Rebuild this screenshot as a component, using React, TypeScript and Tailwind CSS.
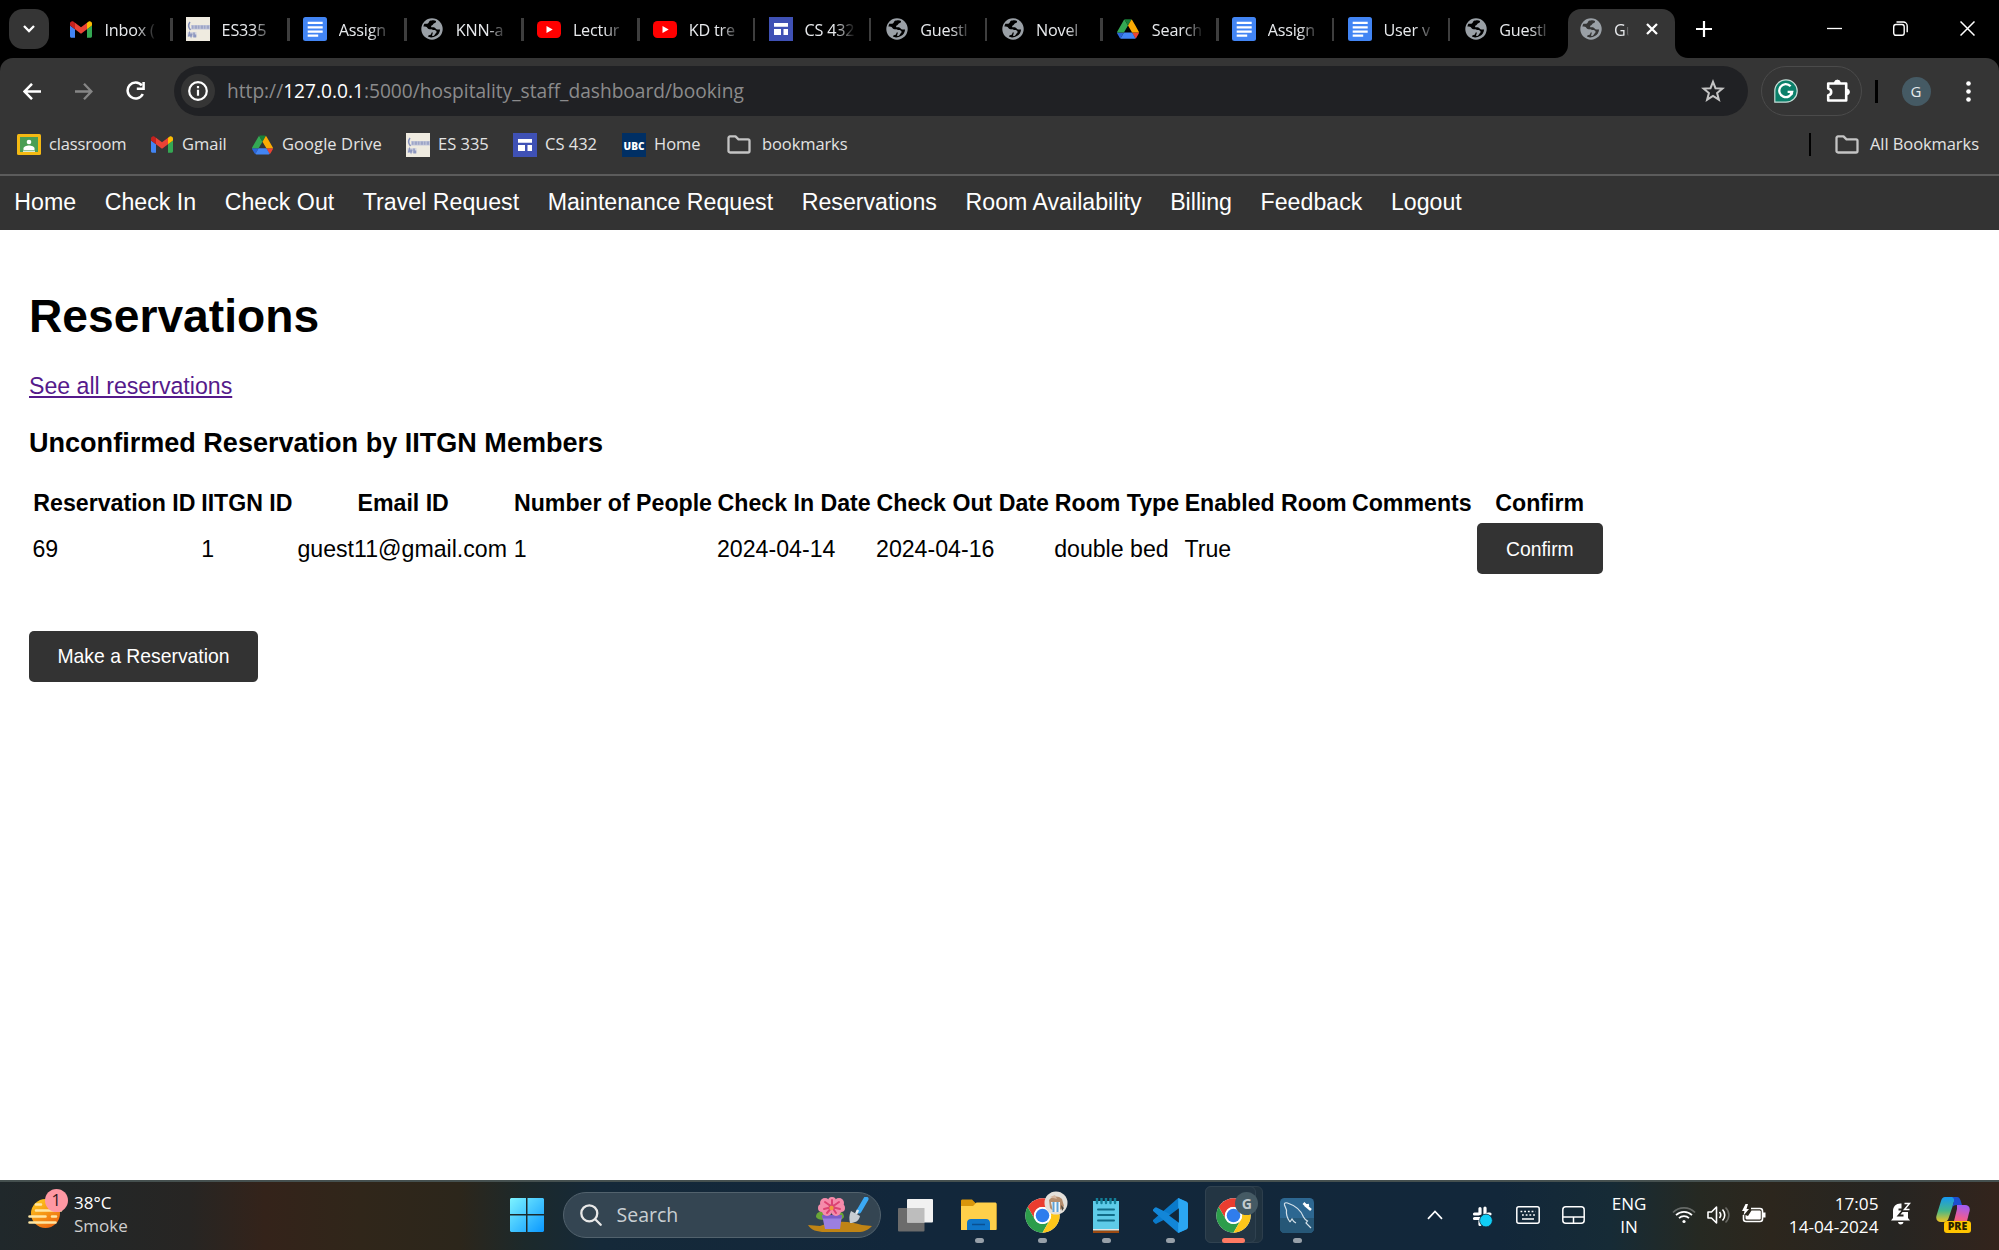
import React from "react";

type IconProps = { className?: string };

const Gmail = ({ className = "" }: IconProps) => (
  <svg viewBox="52 42 88 66" className={className}>
    <path fill="#4285f4" d="M58 108h14V74L52 59v43c0 3.32 2.69 6 6 6" />
    <path fill="#34a853" d="M120 108h14c3.32 0 6-2.69 6-6V59l-20 15" />
    <path fill="#fbbc04" d="M120 48v26l20-15v-8c0-7.42-8.47-11.65-14.4-7.2" />
    <path fill="#ea4335" d="M72 74V48l24 18 24-18v26L96 92" />
    <path fill="#c5221f" d="M52 51v8l20 15V48l-5.6-4.2c-5.94-4.45-14.4-.22-14.4 7.2" />
  </svg>
);

const Notes = ({ className = "" }: IconProps) => (
  <svg viewBox="0 0 24 24" className={className}>
    <rect width="24" height="24" fill="#efebe0" />
    <path d="M5 8h19v4.500H5z" fill="#c3c7da" />
    <path d="M1.500 15h9v5h-9z" fill="#d3d4de" />
    <g fill="none" stroke="#8590bb" strokeWidth="1.500">
      <path d="M4 5c-2.200 3-2.200 5 .5 8" />
      <path strokeWidth="3.200" strokeDasharray="1.500 1.200 2.500 .8" d="M6 10.200h17" opacity=".6" />
      <path d="M2.500 19.500l1-3.500 1.500 3.500 1-3M8 15.500v5M9.500 17.500v3" opacity=".9" />
    </g>
  </svg>
);

const Docs = ({ className = "" }: IconProps) => (
  <svg viewBox="0 0 24 24" className={className}>
    <rect width="24" height="24" rx="2.500" fill="#4285f4" />
    <path stroke="#fff" strokeWidth="2.300" d="M4.700 5.800h15M4.700 10.300h15M4.700 14.600h15M4.700 18.600h10.500" />
  </svg>
);

const Globe = ({ className = "", ink = "#000" }: IconProps & { ink?: string }) => (
  <svg viewBox="0 0 22 22" className={className}>
    <circle cx="11" cy="11" r="10.700" fill="#9aa0a6" />
    <path
      fill={ink}
      d="M12.300 2.200c1.200.2 2 .5 2.700.9.3 1.300-.6 1.900-1.800 2.200-1.200.3-.9 1.600-2 2-1 .3-1.300.9-.9 1.900 1.700.1 3.500-.2 4.400 1.200.8 1.300 2.300.8 4.400 1-.2 2.800-1.800 5.300-4.200 6.700-1.300.8-3.300 1.400-5 1.300-1.200-.1-2.200-.4-3-.8.200-1.500 1.500-1.500 2.600-1.900 1.100-.5.500-1.800 1.600-2.400 1.100-.5 1.400-1.300.9-2.100-.8-1-2.500-.7-3.800-.9-1.900-.3-1.700-2.200-3.200-2.600-.9-.3-1.700-.1-2.600-.3.200-1 .5-1.800 1-2.600 1.300 0 2.500.3 3.500-.4 1.200-.8 1-2 2.100-2.700 1-.6 2.200-.2 3.300-.5z"
    />
    <path fill="#9aa0a6" d="M11 12.500c2-.9 4.200-.2 4.600 1.200.2 1.200-1.200 1.500-1.700 2.700-.4.900-1.300 1.600-2.400 1.500-.9-.4-.1-1.500.2-2.400.3-1.100-1.300-1.700-.7-3z" />
  </svg>
);

const YouTube = ({ className = "" }: IconProps) => (
  <svg viewBox="0 0 24 17" className={className}>
    <rect width="24" height="17" rx="4.500" fill="#f00" />
    <path d="M9.500 4.900v7.200l6.200-3.600z" fill="#fff" />
  </svg>
);

const Sites = ({ className = "" }: IconProps) => (
  <svg viewBox="0 0 24 24" className={className}>
    <rect width="24" height="24" fill="#3f51b5" />
    <path fill="#fff" d="M5 6h14v3.800H5zM5 12h7v6H5zM14.500 12H19v6h-4.500z" />
  </svg>
);

const Drive = ({ className = "" }: IconProps) => (
  <svg viewBox="0 0 87.3 78" className={className}>
    <path d="m6.600 66.850 3.850 6.650c.8 1.400 1.950 2.500 3.300 3.300l13.750-23.800h-27.500c0 1.550.4 3.100 1.200 4.500z" fill="#2b66d9" />
    <path d="m43.650 25-13.750-23.800c-1.350.8-2.500 1.900-3.300 3.300l-25.400 44a9.060 9.060 0 0 0 -1.200 4.500h27.500z" fill="#34a853" />
    <path d="m73.550 76.800c1.350-.8 2.500-1.900 3.300-3.300l1.600-2.750 7.650-13.250c.8-1.400 1.200-2.950 1.200-4.500h-27.500l5.850 11.500z" fill="#ea4335" />
    <path d="m43.650 25 13.750-23.800c-1.350-.8-2.900-1.200-4.500-1.200h-18.500c-1.600 0-3.150.45-4.500 1.200z" fill="#188038" />
    <path d="m59.800 53h-32.300l-13.750 23.800c1.350.8 2.900 1.200 4.500 1.200h50.800c1.600 0 3.150-.45 4.500-1.200z" fill="#4285f4" />
    <path d="m73.400 26.500-12.700-22c-.8-1.400-1.950-2.500-3.300-3.300l-13.750 23.800 16.150 28h27.450c0-1.550-.4-3.100-1.200-4.500z" fill="#fbab04" />
  </svg>
);

const Classroom = ({ className = "" }: IconProps) => (
  <svg viewBox="0 0 24 21" className={className}>
    <rect width="24" height="21" rx="1.500" fill="#f4b913" />
    <rect x="3" y="3" width="18" height="15" fill="#4b9e55" />
    <circle cx="12" cy="8" r="2.300" fill="#fff" />
    <path d="M6.500 16v-1.500c0-2 3-3 5.500-3s5.500 1 5.500 3V16z" fill="#fff" />
    <path d="M6 18h12v-1.500H6z" fill="#d6ead8" />
  </svg>
);

const Folder = ({ className = "" }: IconProps) => (
  <svg viewBox="0 0 24 19" className={className}>
    <path
      d="M1.500 3c0-.8.600-1.600 1.500-1.600h5.500l3 2.900H21c.9 0 1.500.7 1.500 1.500v10.200c0 .8-.6 1.500-1.500 1.500H3c-.9 0-1.500-.7-1.500-1.500z"
      fill="none"
      stroke="#c4c4c4"
      strokeWidth="2.300"
      strokeLinejoin="round"
    />
  </svg>
);

const ChromeLogo = ({ className = "" }: IconProps) => (
  <svg viewBox="0 0 48 48" className={className}>
    <circle cx="24" cy="24" r="23.500" fill="#fff" />
    <path d="M3.650 12.250A23.500 23.500 0 0 1 44.350 12.250H24A11.750 11.750 0 0 0 13.820 29.880z" fill="#ea3d2f" />
    <path d="M3.650 12.250A23.500 23.500 0 0 0 24 47.500L34.180 29.880A11.750 11.750 0 0 1 13.820 29.880z" fill="#2c9d4b" />
    <path d="M24 47.500A23.500 23.500 0 0 0 44.350 12.250H24A11.750 11.750 0 0 1 34.180 29.880z" fill="#fdc61a" />
    <circle cx="24" cy="24" r="11.700" fill="#fff" />
    <circle cx="24" cy="24" r="9.300" fill="#2f7ded" />
  </svg>
);

const tabs: { icon: "gmail" | "notes" | "docs" | "globe" | "yt" | "sites" | "drive"; title: string }[] = [
  { icon: "gmail", title: "Inbox (" },
  { icon: "notes", title: "ES335" },
  { icon: "docs", title: "Assign" },
  { icon: "globe", title: "KNN-a" },
  { icon: "yt", title: "Lectur" },
  { icon: "yt", title: "KD tre" },
  { icon: "sites", title: "CS 432" },
  { icon: "globe", title: "Guestl" },
  { icon: "globe", title: "Novel" },
  { icon: "drive", title: "Search" },
  { icon: "docs", title: "Assign" },
  { icon: "docs", title: "User v" },
  { icon: "globe", title: "Guestl" },
];

const TabIcon = ({ kind }: { kind: (typeof tabs)[number]["icon"] }) => {
  switch (kind) {
    case "gmail":
      return <Gmail className="h-[17px] w-[22px]" />;
    case "notes":
      return <Notes className="size-[24px]" />;
    case "docs":
      return <Docs className="size-[24px]" />;
    case "globe":
      return <Globe className="size-[22px]" />;
    case "yt":
      return <YouTube className="h-[17px] w-[24px]" />;
    case "sites":
      return <Sites className="size-[24px]" />;
    case "drive":
      return <Drive className="h-[20px] w-[22px]" />;
  }
};

const TabStrip = () => (
  <div className="flex h-[58px] w-full shrink-0 bg-black text-[16.200px] text-[#e8eaed]">
    <div className="mt-[9px] ml-[9px] flex size-10 items-center justify-center rounded-[14px] bg-[#353535]">
      <svg viewBox="0 0 12 8" className="h-2 w-3" fill="none" stroke="#fff" strokeWidth="2.300">
        <path d="M1 1l5 5 5-5" />
      </svg>
    </div>
    <div className="ml-[6.500px] flex w-[1512px]">
      {tabs.map((t, i) => (
        <div key={i} className={`flex h-[58px] items-center ${i < 4 ? "w-[117.100px]" : "w-[115.800px]"}`}>
          <div className="ml-[13.500px] flex w-6 justify-center">
            <TabIcon kind={t.icon} />
          </div>
          <div className="mt-[2px] ml-[11.500px] h-6 w-[52px] overflow-hidden leading-6 tracking-[-0.200px] whitespace-nowrap [mask-image:linear-gradient(to_right,#000_60%,transparent_100%)]">
            {t.title}
          </div>
          {i < tabs.length - 1 && <div className="ml-auto h-[23px] w-[2.500px] bg-[#3e3e3e]" />}
        </div>
      ))}
    </div>
    <div className="relative mt-[9px] flex h-[49px] w-[107px] items-center rounded-t-[13px] bg-[#353535] pb-[9px]">
      <svg className="absolute bottom-0 left-[-13px] size-[13px]" viewBox="0 0 13 13">
        <path d="M13 0v13H0A13 13 0 0 0 13 0" fill="#353535" />
      </svg>
      <svg className="absolute right-[-13px] bottom-0 size-[13px]" viewBox="0 0 13 13">
        <path d="M0 0v13h13A13 13 0 0 1 0 0" fill="#353535" />
      </svg>
      <Globe className="ml-[12.500px] size-[22px]" ink="#353535" />
      <div className="mt-[2px] ml-3 h-6 w-[15px] overflow-hidden leading-6 [mask-image:linear-gradient(to_right,#000_65%,transparent)]">Gu</div>
      <svg viewBox="0 0 12 12" className="ml-[16.500px] size-3" fill="none" stroke="#fff" strokeWidth="2.300">
        <path d="M1 1l10 10M11 1L1 11" />
      </svg>
    </div>
    <svg viewBox="0 0 16 16" className="mt-[21px] ml-[21px] size-4" fill="none" stroke="#fff" strokeWidth="2.200">
      <path d="M8 0v16M0 8h16" />
    </svg>
    <div className="mt-[21px] ml-auto flex items-center self-start">
      <svg viewBox="0 0 15 15" className="size-[15px]" stroke="#fff" strokeWidth="1.300">
        <path d="M0 7.500h15" />
      </svg>
      <svg viewBox="0 0 15 15" className="ml-[51px] size-[15px]" fill="none" stroke="#fff" strokeWidth="1.400">
        <rect x=".7" y="3.500" width="10.500" height="10.800" rx="2.200" />
        <path d="M3.500 1h6.800a3.900 3.900 0 0 1 3.900 3.900v6.300" />
      </svg>
      <svg viewBox="0 0 15 15" className="mr-[24.500px] ml-[52px] size-[15px]" stroke="#fff" strokeWidth="1.500">
        <path d="M.5.5l14 14M14.500.5l-14 14" />
      </svg>
    </div>
  </div>
);

const Toolbar = () => (
  <div className="flex h-[66px] w-full shrink-0 items-center">
    <svg viewBox="0 0 18 17" className="ml-[23px] h-[17px] w-[18px]" fill="none" stroke="#fff" strokeWidth="2.500">
      <path d="M9 .8L1.600 8.500 9 16.200M1.500 8.500H18" />
    </svg>
    <svg viewBox="0 0 18 17" className="ml-[34px] h-[17px] w-[18px]" fill="none" stroke="#868686" strokeWidth="2.300">
      <path d="M9 .8l7.400 7.700L9 16.200M16.500 8.500H0" />
    </svg>
    <svg viewBox="0 0 20 20" className="ml-[33px] size-5" fill="none" stroke="#fff" strokeWidth="2.500">
      <path d="M16.800 13a8 8 0 1 1-1-8.600" />
      <path d="M17.600 1v6.800h-6.800" />
    </svg>
    <div className="ml-[27.500px] flex h-[49.500px] w-[1574.500px] items-center rounded-full bg-[#202124]">
      <div className="ml-[7px] flex size-[34px] items-center justify-center rounded-full bg-[#353535]">
        <svg viewBox="0 0 20 20" className="size-5" fill="none" stroke="#fff" strokeWidth="2.200">
          <circle cx="10" cy="10" r="8.800" />
          <path d="M10 8.800v6M10 5v2.200" />
        </svg>
      </div>
      <div className="ml-[12.500px] text-[19.150px] whitespace-nowrap text-[#8b8b8c]">
        http://<span className="text-white">127.0.0.1</span>:5000/hospitality_staff_dashboard/booking
      </div>
      <svg viewBox="0 0 24 24" className="mr-[23px] ml-auto size-6" fill="none" stroke="#c4c4c4" strokeWidth="2">
        <path d="M12 2.800l2.500 6.400 6.900.4-5.300 4.400 1.800 6.700L12 17l-5.900 3.700L7.900 14 2.600 9.600l6.900-.4z" />
      </svg>
    </div>
    <div className="ml-[13px] flex h-[49.500px] w-[101px] items-center rounded-full border-[1.500px] border-[#4b4b4b]">
      <svg viewBox="0 0 24 24" className="ml-3 size-6">
        <path d="M12 .8A11.200 11.200 0 1 1 12 23.200H.8V12A11.200 11.200 0 0 1 12 .8" fill="#0b806a" stroke="#c8dcd7" strokeWidth="1.200" />
        <path d="M16.600 7.300a6.500 6.500 0 1 0 1.600 5.500h-4.600" fill="none" stroke="#fff" strokeWidth="2.300" />
        <path d="M15.500 12.800l3 2.700" stroke="#fff" strokeWidth="2" />
      </svg>
      <svg viewBox="0 0 25 25" className="ml-7 size-[25px]" fill="none" stroke="#fff" strokeWidth="2.600" strokeLinejoin="round">
        <path d="M2.200 4.500h18v17h-18v-5.200c4-1 4-5.700 0-6.700z" />
        <path d="M8.500 4a2.900 2.900 0 0 1 5.800 0zM20.500 10a2.900 2.900 0 0 1 0 5.800z" fill="#fff" strokeWidth="1" />
      </svg>
    </div>
    <div className="ml-[13px] h-[23px] w-[2.500px] bg-black" />
    <div className="ml-[24px] flex size-[29px] items-center justify-center rounded-full bg-[#455a64] text-[15px] text-[#e6ebed]">G</div>
    <svg viewBox="0 0 5 21" className="ml-[35px] h-[21px] w-[5px]" fill="#fff">
      <circle cx="2.500" cy="2.500" r="2.300" />
      <circle cx="2.500" cy="10.500" r="2.300" />
      <circle cx="2.500" cy="18.500" r="2.300" />
    </svg>
  </div>
);

const BookmarkBar = () => (
  <div className="flex h-[50px] w-full shrink-0 items-center pb-[9px] text-[16.500px] whitespace-nowrap text-[#e3e3e3]">
    <Classroom className="ml-[17px] h-[21px] w-6" />
    <span className="ml-2 w-[77px] tracking-[-0.150px]">classroom</span>
    <Gmail className="ml-[25px] h-[17px] w-[22px]" />
    <span className="ml-[9px] w-[45px]">Gmail</span>
    <Drive className="ml-[25px] h-[20px] w-[21px]" />
    <span className="ml-[9px] w-[101px] tracking-[0.080px]">Google Drive</span>
    <Notes className="ml-[23px] size-6" />
    <span className="ml-2 w-[51px]">ES 335</span>
    <Sites className="ml-6 size-6" />
    <span className="ml-2 w-[53px]">CS 432</span>
    <div className="ml-[24px] flex size-6 items-center justify-center bg-[#002f64] pt-1 text-[10px] font-extrabold text-white">UBC</div>
    <span className="ml-2 w-[47px]">Home</span>
    <Folder className="ml-[26px] h-[19px] w-6" />
    <span className="ml-[11px] w-[86px] tracking-[-0.100px]">bookmarks</span>
    <div className="ml-auto h-[23px] w-[2.500px] bg-black" />
    <Folder className="ml-[24px] h-[19px] w-6" />
    <span className="mr-5 ml-[11px] w-[109px] tracking-[-0.080px]">All Bookmarks</span>
  </div>
);

const navItems = [
  "Home",
  "Check In",
  "Check Out",
  "Travel Request",
  "Maintenance Request",
  "Reservations",
  "Room Availability",
  "Billing",
  "Feedback",
  "Logout",
];

const headers = [
  "Reservation ID",
  "IITGN ID",
  "Email ID",
  "Number of People",
  "Check In Date",
  "Check Out Date",
  "Room Type",
  "Enabled Room",
  "Comments",
  "Confirm",
];

const row = ["69", "1", "guest11@gmail.com", "1", "2024-04-14", "2024-04-16", "double bed", "True", ""];

const Page = () => (
  <main className="flex flex-1 flex-col items-start bg-white pl-[29px] font-['Liberation_Sans',Arial,sans-serif] text-[23.150px] text-black">
    <h1 className="mt-[60px] text-[46.200px] leading-[52px] font-bold">Reservations</h1>
    <a className="mt-[31px] leading-[26px] text-[#551a8b] underline">See all reservations</a>
    <h3 className="mt-[29px] text-[27.050px] leading-[30px] font-bold">Unconfirmed Reservation by IITGN Members</h3>
    <table className="mt-[29px] w-[1576.800px] table-fixed border-separate border-spacing-[2.860px] leading-[26px] whitespace-nowrap">
      <colgroup>
        <col className="w-[165.800px]" />
        <col className="w-[93.700px]" />
        <col className="w-[213.100px]" />
        <col className="w-[200.100px]" />
        <col className="w-[156.100px]" />
        <col className="w-[175.100px]" />
        <col className="w-[127.600px]" />
        <col className="w-[164.100px]" />
        <col className="w-[122.600px]" />
        <col className="w-[127.500px]" />
      </colgroup>
      <thead>
        <tr>
          {headers.map((h) => (
            <th key={h} className="px-0 pt-[1.400px] pb-[3px] text-center font-bold">
              {h}
            </th>
          ))}
        </tr>
      </thead>
      <tbody>
        <tr>
          {row.map((c, i) => (
            <td key={i} className="p-[1.400px] align-middle">
              {c}
            </td>
          ))}
          <td className="p-[1.400px]">
            <button className="block h-[51.500px] w-[126px] rounded-[5px] bg-[#333] text-[19.350px] text-white">Confirm</button>
          </td>
        </tr>
      </tbody>
    </table>
    <button className="mt-[53px] h-[51.500px] w-[229px] rounded-[5px] bg-[#333] text-[19.350px] text-white">Make a Reservation</button>
  </main>
);

const TaskSlot = ({ children, dot = true }: { children: React.ReactNode; dot?: boolean }) => (
  <div className="flex h-full w-[63.700px] flex-col items-center">
    <div className="relative mt-[14.500px] flex h-[37px] items-center justify-center">{children}</div>
    {dot && <div className="mt-[4px] h-[5px] w-[9px] rounded-full bg-[#97a0a9]" />}
  </div>
);

const Taskbar = () => (
  <div className="flex h-[70px] w-full shrink-0 border-t-2 border-[#45504f] bg-[linear-gradient(to_right,#20282b_0px,#272523_190px,#34231a_265px,#30261a_360px,#2c261b_460px,#1c292b_525px,#152939_600px,#12273b_900px,#12273a_1500px,#162b36_1610px,#262922_1700px,#2c261d_1770px,#262522_1890px,#33241c_1999px)] text-[18px] text-white">
    <div className="relative mt-[13px] ml-[27px] h-[38px] w-[40px]">
      <svg viewBox="0 0 40 38" className="h-[38px] w-10">
        <defs>
          <linearGradient id="sun" x1="0" y1="0" x2=".6" y2="1">
            <stop offset="0" stopColor="#ffd21f" />
            <stop offset="1" stopColor="#ee6a10" />
          </linearGradient>
        </defs>
        <circle cx="18.500" cy="18.500" r="14.500" fill="url(#sun)" />
        <g stroke="#ffe6a3" strokeWidth="2.600" strokeLinecap="round">
          <path d="M9 9.500h5M9 15.500h25M2.500 21.500h16M25 21.500h4M2.500 27.500h26" />
        </g>
      </svg>
      <div className="absolute top-[-6.500px] left-[17.500px] flex size-[23.500px] items-center justify-center rounded-full bg-[#ff98a3] text-[16.500px] text-[#33181c]">1</div>
    </div>
    <div className="mt-[9px] ml-[7px] w-[80px] text-[17px] leading-[23px]">
      <div>38°C</div>
      <div className="text-[#cfcfcf]">Smoke</div>
    </div>
    <svg viewBox="0 0 34 34" className="mt-[16px] ml-[356px] size-[34px]">
      <defs>
        <linearGradient id="win" x1="0" y1="0" x2="1" y2="1">
          <stop offset="0" stopColor="#7df3ff" />
          <stop offset="1" stopColor="#0a98ff" />
        </linearGradient>
      </defs>
      <path fill="url(#win)" d="M1 0h15v16H0V1zM17.500 0H33l1 1v15H17.500zM0 17.500h16V34H1l-1-1zM17.500 17.500H34V33l-1 1H17.500z" />
    </svg>
    <div className="mt-[10px] ml-[19px] flex h-[46px] w-[318px] items-center rounded-full border border-[#52626d] bg-[#344552]">
      <svg viewBox="0 0 22 22" className="ml-[16px] size-[22px]" fill="none" stroke="#e8e8e8" strokeWidth="2.300" strokeLinecap="round">
        <circle cx="9.300" cy="9.300" r="8" />
        <path d="M15.200 15.200l5.500 5.500" />
      </svg>
      <span className="ml-[14.500px] w-[70px] text-[19.500px] text-[#c9cfd3]">Search</span>
      <svg viewBox="0 0 66 36" className="ml-[120px] h-9 w-[66px]">
        <path d="M1 28l12 1c15-6 30-5 42-1l10 1c-4 4-8 6-14 6H18C10 35 4 33 1 28z" fill="#c08415" />
        <path d="M9 20c0-5 4-6 8-5l4 5-4 3c-4 0-7-1-8-3zM37 20c0-5-4-6-8-5l-3 5 4 3c4 0 6-1 7-3z" fill="#6aa637" />
        <path d="M15 18h20l-2 14H18z" fill="#9b7fe0" />
        <path d="M15 18h20l-.5 3.500h-19z" fill="#7c5cc9" />
        <g fill="#f58bab">
          <circle cx="18" cy="6" r="5" />
          <circle cx="25" cy="4" r="4" />
          <circle cx="32" cy="6" r="5" />
          <circle cx="34" cy="11" r="4" />
          <circle cx="29" cy="14" r="5" />
          <circle cx="20" cy="14" r="5" />
          <circle cx="15" cy="11" r="4" />
        </g>
        <path d="M25 10l-7-5M25 10l0-7M25 10l7-5M25 10l8 2M25 10l4 6M25 10l-5 6M25 10l-8 2" stroke="#dc4272" strokeWidth="2" strokeLinecap="round" />
        <circle cx="24.500" cy="11" r="2.200" fill="#ef9a3d" />
        <path d="M59 2l-7 12" stroke="#3ba9f4" strokeWidth="5" strokeLinecap="round" />
        <path d="M51 13l-2 4" stroke="#dfe6ea" strokeWidth="2.500" />
        <path d="M44 14l9 5c-1 5-5 7-10 7-1-4-1-8 1-12z" fill="#c7cdd2" />
      </svg>
    </div>
    <div className="ml-[2.500px] flex h-full">
      <TaskSlot dot={false}>
        <svg viewBox="0 0 35 33" className="h-[33px] w-[35px]">
          <rect x="0" y="9" width="26.500" height="23.500" rx="1" fill="#6b6b6b" />
          <rect x="9" y="0" width="26" height="23.500" rx="1" fill="#f1f1f1" />
          <rect x="9" y="9" width="17.500" height="14.500" fill="#bdbdbd" />
        </svg>
      </TaskSlot>
      <TaskSlot>
        <svg viewBox="0 0 36 32" className="h-8 w-9">
          <path d="M0 2c0-1 .6-1.500 1.500-1.500H11l3.500 3.500H34c1 0 1.500.5 1.500 1.500V30H0z" fill="#d9960b" />
          <path d="M0 7h12l3.500-3.500H34c1 0 1.500.5 1.500 1.500v26H0z" fill="#ffd04a" />
          <path d="M6 31v-7c0-2.500 1.500-4 4-4h15c2.500 0 4 1.500 4 4v7z" fill="#0f75c8" />
          <path d="M11 25.500h13" stroke="#0a4f90" strokeWidth="1.500" />
        </svg>
      </TaskSlot>
      <TaskSlot>
        <ChromeLogo className="size-[35px]" />
        <svg viewBox="0 0 24 24" className="absolute top-[-5.500px] left-[19px] size-6">
          <circle cx="12" cy="12" r="11.500" fill="#e4e0da" />
          <path d="M5 9c3-4 9-5 13-1l2 7c-4 6-11 6-14 2z" fill="#b58d6d" />
          <path d="M7 11h9v10H9z" fill="#f4f6f8" />
          <path d="M9.500 11v10M13.500 11v10" stroke="#5fa3d8" strokeWidth="2" />
          <path d="M17 14l3 3-2 3z" fill="#4c443a" />
          <path d="M6 6l5-2 2 4z" fill="#d8b8a0" />
        </svg>
      </TaskSlot>
      <TaskSlot>
        <svg viewBox="0 0 26 35" className="h-[35px] w-[26px]">
          <path d="M0 3h26v30H0z" fill="#5ecbe8" />
          <path d="M0 31h26v1.500H0z" fill="#e8e4e0" />
          <path d="M0 32.500h26V35H0z" fill="#9c4a12" />
          <path d="M4 0v5M8.500 0v5M13 0v5M17.500 0v5M22 0v5" stroke="#137e97" strokeWidth="2.400" strokeLinecap="round" />
          <path d="M5 11.500h16M5 17h16M5 22.500h16" stroke="#116c88" strokeWidth="2" strokeLinecap="round" />
        </svg>
      </TaskSlot>
      <TaskSlot>
        <svg viewBox="0 0 100 100" className="size-[35px]">
          <path d="M72 0L96 11c2 1 4 4 4 7v10L12 72c-2 2-5 2-7 0l-4-4c-2-2-2-4 0-6z" fill="#0a7acb" />
          <path d="M1 38c-2-2-2-5 0-6l4-4c2-2 5-2 7 0l88 44v10c0 3-2 6-4 7L72 100z" fill="#1286d8" />
          <path d="M72 0v100l24-11c2-1 4-4 4-7V18c0-3-2-6-4-7z" fill="#2ba6f2" />
          <path d="M74 29v42L46 50z" fill="#12273b" />
        </svg>
      </TaskSlot>
      <div className="relative flex h-full w-[63.700px] flex-col items-center">
        <div className="absolute top-[4px] left-[3px] h-[57px] w-[58px] rounded-[6px] border border-[#2d3e4c] bg-[#20323f]" />
        <div className="absolute top-[4px] left-[3px] h-[57px] w-[51px] rounded-[6px] border border-[#304250] bg-[#233543]" />
        <div className="relative mt-[14.500px] flex h-[37px] items-center">
          <ChromeLogo className="size-[35px]" />
          <div className="absolute top-[-5px] left-[19px] flex size-[23px] items-center justify-center rounded-full bg-[#455a64] text-[14px] font-bold text-[#c3cbcf]">G</div>
        </div>
        <div className="relative mt-[4px] h-[5px] w-[23px] rounded-full bg-[#ff7a63]" />
      </div>
      <TaskSlot>
        <svg viewBox="0 0 34 35" className="h-[35px] w-[34px]">
          <rect width="34" height="35" rx="4.500" fill="#2d6791" />
          <path d="M0 20h34v10.500a4.500 4.500 0 0 1-4.500 4.500h-25A4.500 4.500 0 0 1 0 30.500z" fill="#265777" />
          <path d="M10 24c-3-4-4-8-3.500-12L4.500 7c-.5-2 1-2.700 3-2 6 2 13 6 16 14 1 2 2 3 4 4l-1.500 2 5 5M10 24l2-3c1 2 2 3 4 4" fill="none" stroke="#d6e2ea" strokeWidth="1.200" />
          <path d="M23.500 5l2.500 2.500 3-.5M25 7l6 5" stroke="#fff" strokeWidth="2.600" fill="none" />
        </svg>
      </TaskSlot>
    </div>
    <div className="ml-auto flex h-full items-center pb-[3px]">
      <svg viewBox="0 0 16 10" className="h-[10px] w-4" fill="none" stroke="#fff" strokeWidth="1.700">
        <path d="M1 8.800L8 1.500l7 7.300" />
      </svg>
      <svg viewBox="0 0 22 22" className="mt-1 ml-[28.500px] size-[22px]">
        <g stroke="#fff" strokeWidth="3.200" strokeLinecap="round">
          <path d="M8 2.500v5M13 2v6M2.500 8h4M2.500 12.500h6M16 8h2M8 15v3.500" />
        </g>
        <circle cx="14" cy="14.500" r="6.400" fill="#10cdf5" stroke="#12273a" strokeWidth=".8" />
      </svg>
      <svg viewBox="0 0 24 18" className="ml-[22.500px] h-[18px] w-6" fill="none" stroke="#fff" strokeWidth="1.500">
        <rect x=".8" y=".8" width="22.400" height="16.400" rx="2" />
        <path d="M4.500 5.500h15M6 9h13" strokeDasharray="1.800 1.900" strokeWidth="1.700" />
        <path d="M6 13h12" />
      </svg>
      <svg viewBox="0 0 23 18" className="ml-[22px] h-[18px] w-[23px]" fill="none" stroke="#fff" strokeWidth="1.500">
        <rect x=".8" y=".8" width="21.400" height="16.400" rx="3" />
        <path d="M.8 11h21.400M11.500 11v6" />
      </svg>
      <div className="ml-[24px] w-[40px] text-center text-[17px] leading-[23px]">
        ENG
        <br />
        IN
      </div>
      <svg viewBox="0 0 24 18" className="ml-[23px] h-[18px] w-6" fill="none" stroke="#fff" strokeWidth="1.700">
        <path d="M1 6.500a15.500 15.500 0 0 1 22 0" opacity=".3" />
        <path d="M4 9.200a11.300 11.300 0 0 1 16 0M7 12.200a7 7 0 0 1 10 0" />
        <circle cx="12" cy="15.500" r="1.600" fill="#fff" stroke="none" />
      </svg>
      <svg viewBox="0 0 24 20" className="ml-[10.500px] h-5 w-6" fill="none" stroke="#fff" strokeWidth="1.600">
        <path d="M1 7h3.500L9.500 2v16l-5-5H1z" strokeLinejoin="round" />
        <path d="M12.500 7c1.500 1.800 1.500 4.200 0 6M15.500 4.500c3 3.200 3 7.800 0 11" />
        <path d="M18.500 2.500c4.500 4.500 4.500 10.500 0 15" opacity=".3" />
      </svg>
      <svg viewBox="0 0 24 20" className="mb-0.5 ml-[11px] h-5 w-6" fill="none">
        <path d="M9 4.500h9c1.500 0 2.500 1 2.500 2.500v8c0 1.500-1 2.500-2.500 2.500H4c-1.500 0-2.500-1-2.500-2.500v-4" stroke="#fff" strokeWidth="1.600" />
        <path d="M9.500 6.500H18l.8.8v7.400l-.8.800H4.500l-1-1v-3.500L6 12z" fill="#fff" />
        <path d="M21 8.500h2.500v5H21zM3.500 0L0 7h2.500L1.500 11.500 7 5H4.500L6 0z" fill="#fff" />
      </svg>
      <div className="ml-[21px] w-[92px] text-right text-[17.200px] leading-[23px] whitespace-nowrap">
        17:05
        <br />
        14-04-2024
      </div>
      <svg viewBox="0 0 20 24" className="mb-1 ml-[12.500px] h-6 w-5">
        <path d="M2 17V10c0-4.500 3-7.500 7.500-7.500h1V11H17v6l2 2.500H0zM7 21h5.500c-.5 1.800-1.500 2.500-2.800 2.500S7.500 22.800 7 21z" fill="#fff" />
        <path d="M7.500 8.500h5l-5 6h5" fill="none" stroke="#282622" strokeWidth="1.800" />
        <path d="M13.500 2.500h5l-5 6h5" fill="none" stroke="#fff" strokeWidth="1.500" />
      </svg>
      <div className="relative mr-[28px] ml-[25px] h-[36px] w-[35px]">
        <svg viewBox="0 0 34 34" className="size-[34px]">
          <defs>
            <linearGradient id="copA" x1="0" y1="0" x2="0" y2="1">
              <stop offset="0" stopColor="#1597f2" />
              <stop offset=".55" stopColor="#45b78a" />
              <stop offset="1" stopColor="#f1c321" />
            </linearGradient>
            <linearGradient id="copB" x1=".5" y1="0" x2=".3" y2="1">
              <stop offset="0" stopColor="#a35cf0" />
              <stop offset=".5" stopColor="#ed5c95" />
              <stop offset="1" stopColor="#fa8146" />
            </linearGradient>
          </defs>
          <path d="M9 0h13c-3 1-4 4-5 8l-4 12c-1 4-3 5-6 5H5c-4 0-6-3-4-8L5 4c1-3 2-4 4-4z" fill="url(#copA)" />
          <path d="M16 0h5c3 0 3.500 3 5 8h-5c-3 0-4 1-5 3l2-7c.5-2-.5-3-2-4z" fill="#1d4fcf" />
          <path d="M21 8h8c4 0 6 3 4 8l-3 12c-1 3-2 4-5 4H13c3-1 4-4 5-8l3-12z" fill="url(#copB)" />
        </svg>
        <div className="absolute right-0 bottom-0 flex h-[12px] w-[27px] items-center justify-center rounded-[3px] bg-[#ffc400] text-[10.500px] leading-none font-extrabold text-[#2a2000]">PRE</div>
      </div>
    </div>
  </div>
);

export default function App() {
  return (
    <div className="flex h-[1250px] w-[1999px] flex-col overflow-hidden bg-white font-['Open_Sans','Noto_Sans',sans-serif]">
      <TabStrip />
      <div className="w-full shrink-0 bg-black">
        <div className="h-[116px] w-full rounded-t-[13px] bg-[#353535]">
          <Toolbar />
          <BookmarkBar />
        </div>
      </div>
      <nav className="flex h-[56px] w-full shrink-0 items-center gap-[28.600px] border-t-2 border-[#5c5c5c] bg-[#333] pb-[2px] pl-[14.300px] font-['Liberation_Sans',Arial,sans-serif] text-[23.180px] whitespace-nowrap text-white">
        {navItems.map((n) => (
          <a key={n}>{n}</a>
        ))}
      </nav>
      <Page />
      <Taskbar />
    </div>
  );
}
